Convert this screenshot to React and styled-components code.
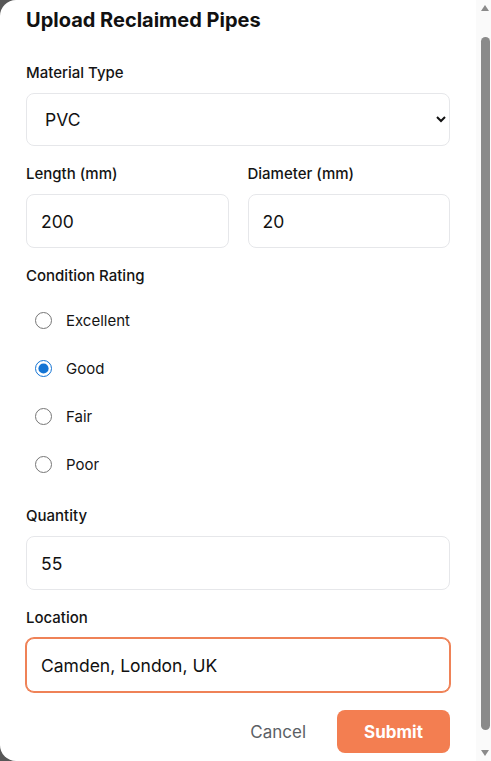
import React, { useEffect, useRef, useState } from 'react';
import styled, { createGlobalStyle } from 'styled-components';

const GlobalStyle = createGlobalStyle`
  html, body {
    margin: 0;
    padding: 0;
    height: 100%;
    overflow: hidden;
    background: #575757;
  }
  * {
    box-sizing: border-box;
  }
`;

const Overlay = styled.div`
  height: 100vh;
  width: 100vw;
  background: #575757;
`;

const Panel = styled.div`
  display: flex;
  height: 100%;
  background: #ffffff;
  border-radius: 16px 0 0 16px;
  overflow: hidden;
  font-family: Inter, "Noto Sans", sans-serif;
  color: #111111;
`;

const Scroller = styled.div`
  flex: 1;
  min-width: 0;
  overflow-y: auto;
  scrollbar-width: none;
  &::-webkit-scrollbar {
    display: none;
  }
`;

const Rail = styled.div`
  width: 15px;
  flex: none;
  display: flex;
  flex-direction: column;
  align-items: center;
  background: #fafafa;
`;

const ArrowBox = styled.div`
  height: 16px;
  flex: none;
  display: flex;
  align-items: center;
  justify-content: center;
  padding-left: 3px;
`;

const Track = styled.div`
  flex: 1;
  width: 100%;
  display: flex;
  justify-content: flex-end;
  padding: 21px 1px 15px 0;
`;

const Thumb = styled.div`
  width: 9px;
  height: 100%;
  border-radius: 5px;
  background: #8a8a8a;
`;

const Form = styled.form`
  display: flex;
  flex-direction: column;
  gap: 18px;
  padding: 24px 26px 24px 26px;
`;

const Title = styled.h2`
  margin: 0 0 11px;
  font-size: 20px;
  line-height: 28px;
  font-weight: 700;
  color: #111111;
`;

const Field = styled.div`
  display: flex;
  flex-direction: column;
  min-width: 0;
`;

const Label = styled.label`
  font-size: 15px;
  line-height: 20px;
  font-weight: 500;
  margin-bottom: 10px;
  color: #141414;
`;

const Row = styled.div`
  display: grid;
  grid-template-columns: 1fr 1fr;
  gap: 19px;
`;

const Input = styled.input`
  height: 54px;
  width: 100%;
  padding: 0 14px;
  border: 1px solid ${p => (p.$active ? '#ef8257' : '#e6e7ea')};
  box-shadow: ${p => (p.$active ? '0 0 0 1px #ef8257' : 'none')};
  border-radius: 8px;
  font-family: inherit;
  font-size: 17.5px;
  color: #111111;
  background: #ffffff;
  outline: none;
`;

const Select = styled.select`
  height: 53px;
  width: 100%;
  padding: 0 10px 0 14px;
  border: 1px solid #e6e7ea;
  border-radius: 8px;
  font-family: inherit;
  font-size: 17.5px;
  color: #111111;
  background: #ffffff;
  outline: none;
`;

const RadioGroup = styled.div`
  display: flex;
  flex-direction: column;
`;

const RadioOption = styled.label`
  display: flex;
  align-items: center;
  gap: 14px;
  height: 48px;
  padding-left: 9px;
  font-size: 15px;
  color: #141414;
  cursor: pointer;
`;

const Radio = styled.input`
  margin: 0;
  width: 17px;
  height: 17px;
  accent-color: #1474d4;
`;

const Actions = styled.div`
  display: flex;
  justify-content: flex-end;
  align-items: center;
  gap: 11px;
`;

const CancelButton = styled.button`
  height: 43px;
  padding: 0 20px;
  border: none;
  background: transparent;
  font-family: inherit;
  font-size: 17px;
  color: #5b5f66;
  cursor: pointer;
`;

const SubmitButton = styled.button`
  height: 43px;
  width: 113px;
  border: none;
  border-radius: 8px;
  background: #f37e51;
  color: #ffffff;
  font-family: inherit;
  font-size: 17px;
  font-weight: 700;
  cursor: pointer;
`;

const Arrow = ({ down }) => (
  <svg width="8" height="6" viewBox="0 0 8 6">
    <polygon points={down ? '0,0 8,0 4,6' : '0,6 8,6 4,0'} fill="#8a8a8a" />
  </svg>
);

const conditions = ['Excellent', 'Good', 'Fair', 'Poor'];

export default function App() {
  const scrollRef = useRef(null);
  const [condition, setCondition] = useState('Good');

  useEffect(() => {
    if (scrollRef.current) scrollRef.current.scrollTop = 18;
  }, []);

  return (
    <Overlay>
      <GlobalStyle />
      <Panel>
        <Scroller ref={scrollRef}>
          <Form onSubmit={e => e.preventDefault()}>
            <Title>Upload Reclaimed Pipes</Title>

            <Field>
              <Label>Material Type</Label>
              <Select defaultValue="PVC">
                <option>PVC</option>
                <option>Copper</option>
                <option>Steel</option>
                <option>Cast Iron</option>
              </Select>
            </Field>

            <Row>
              <Field>
                <Label>Length (mm)</Label>
                <Input defaultValue="200" />
              </Field>
              <Field>
                <Label>Diameter (mm)</Label>
                <Input defaultValue="20" />
              </Field>
            </Row>

            <Field>
              <Label>Condition Rating</Label>
              <RadioGroup>
                {conditions.map(c => (
                  <RadioOption key={c}>
                    <Radio
                      type="radio"
                      name="condition"
                      checked={condition === c}
                      onChange={() => setCondition(c)}
                    />
                    {c}
                  </RadioOption>
                ))}
              </RadioGroup>
            </Field>

            <Field>
              <Label>Quantity</Label>
              <Input defaultValue="55" />
            </Field>

            <Field>
              <Label>Location</Label>
              <Input $active defaultValue="Camden, London, UK" />
            </Field>

            <Actions>
              <CancelButton type="button">Cancel</CancelButton>
              <SubmitButton type="submit">Submit</SubmitButton>
            </Actions>
          </Form>
        </Scroller>
        <Rail>
          <ArrowBox><Arrow /></ArrowBox>
          <Track><Thumb /></Track>
          <ArrowBox><Arrow down /></ArrowBox>
        </Rail>
      </Panel>
    </Overlay>
  );
}
